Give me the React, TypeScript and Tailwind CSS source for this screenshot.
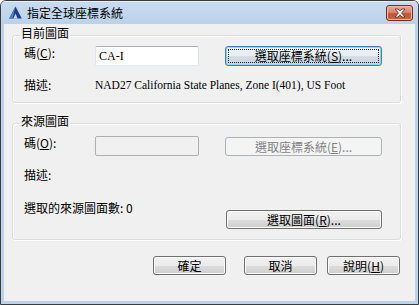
import React from "react";

const CJK = "font-['Noto_Sans_CJK_TC','Noto_Sans_CJK_SC',sans-serif]";
const SERIF = "font-['Liberation_Serif','Noto_Serif_CJK_TC',serif]";

function Btn({
  children,
  className = "",
  kind = "normal",
}: {
  children: React.ReactNode;
  className?: string;
  kind?: "normal" | "focus" | "disabled";
}) {
  if (kind === "disabled") {
    return (
      <div
        className={
          "flex items-center justify-center rounded-[3px] border border-[#adb2b5] bg-[#f4f4f4] text-[12px] leading-[14px] text-[#838383] " +
          className
        }
      >
        {children}
      </div>
    );
  }
  if (kind === "focus") {
    return (
      <div
        className={
          "relative flex items-center justify-center rounded-[3px] border border-[#3c7fb1] bg-[linear-gradient(to_bottom,#eef3f7_0%,#e6ecf1_50%,#d6dde4_50%,#c9d2da_100%)] text-[12px] leading-[14px] text-black shadow-[inset_0_0_0_1px_#8fd6f5] " +
          className
        }
      >
        <div className="absolute inset-[2px] border border-dotted border-[#222]" />
        <span className="relative">{children}</span>
      </div>
    );
  }
  return (
    <div
      className={
        "flex items-center justify-center rounded-[3px] border border-[#707070] bg-[linear-gradient(to_bottom,#f2f2f2_0%,#ebebeb_50%,#dddddd_50%,#cfcfcf_100%)] text-[12px] leading-[14px] text-black shadow-[inset_0_0_0_1px_#fbfbfb] " +
        className
      }
    >
      {children}
    </div>
  );
}

function Group({
  title,
  className = "",
  children,
}: {
  title: string;
  className?: string;
  children: React.ReactNode;
}) {
  return (
    <div
      className={
        "relative ml-[8px] w-[389px] rounded-[3px] border border-[#d5dfe5] shadow-[inset_1px_1px_0_#ffffff,1px_1px_0_#ffffff] " +
        className
      }
    >
      <div className="absolute left-[7px] top-[-10px] bg-[#f0f0f0] px-[1px] text-[12px] leading-[14px] text-black">
        {title}
      </div>
      {children}
    </div>
  );
}

function U({ children }: { children: React.ReactNode }) {
  return <span className="underline underline-offset-[1px]">{children}</span>;
}

export default function App() {
  return (
    <div className={"w-[419px] h-[305px] bg-white " + CJK}>
      <div className="w-[419px] h-[305px] flex flex-col rounded-t-[6px] border border-[#3c3c3c] bg-[#bcd3ec] overflow-hidden">
        {/* title bar */}
        <div className="h-[23px] flex items-center bg-[linear-gradient(to_bottom,#c9dbef_0%,#bcd2ea_100%)] shadow-[inset_0_1px_0_#e4eef9]">
          <svg width="13" height="13" viewBox="0 0 13 13" className="ml-[8px]">
            <polygon points="6.5,0.5 12.8,12.5 0.2,12.5" fill="#1e3c8c" />
            <polygon points="6.5,0.5 3.6,12.5 0.2,12.5" fill="#4f7cc8" />
            <polygon points="6.5,7.5 8.6,12.5 4.4,12.5" fill="#c7d8ee" />
          </svg>
          <div className="ml-[5px] text-[12px] leading-[14px] text-black">指定全球座標系統</div>
          <div className="ml-auto mr-[5px] mt-[1px] w-[27px] h-[16px] flex items-center justify-center rounded-[3px] border border-[#7a2a1e] bg-[linear-gradient(to_bottom,#e9ab9c_0%,#d98571_45%,#c65238_55%,#c9634a_100%)] shadow-[inset_0_0_0_1px_#efb9a9]">
            <svg width="12" height="10" viewBox="0 0 12 10">
              <path
                d="M1 1 L4 1 L6 3.2 L8 1 L11 1 L7.6 5 L11 9 L8 9 L6 6.8 L4 9 L1 9 L4.4 5 Z"
                fill="#ffffff"
                stroke="#5a2a22"
                strokeWidth="0.8"
                strokeLinejoin="round"
              />
            </svg>
          </div>
        </div>

        {/* frame + client */}
        <div className="flex-1 flex px-[3px] pb-[3px]">
          <div className="w-[411px] h-[277px] bg-[#f0f0f0] flex flex-col">
            {/* 目前圖面 */}
            <Group title="目前圖面" className="mt-[11px] pt-[10px] pb-[7px] pl-[11px]">
              <div className="flex items-start h-[20px]">
                <div className="w-[71px] text-[12px] leading-[14px] text-black">
                  碼(<U>C</U>):
                </div>
                <div className="w-[104px] h-[20px] flex items-center border border-[#abadb3] border-b-[#e3e9ef] border-l-[#e2e3ea] border-r-[#dbdfe6] bg-white rounded-[2px]">
                  <span className={"pl-[3px] text-[12px] leading-[14px] text-black " + SERIF}>CA-I</span>
                </div>
                <Btn kind="focus" className="ml-[26px] w-[157px] h-[20px]">
                  選取座標系統(<U>S</U>)...
                </Btn>
              </div>
              <div className="mt-[9px] h-[20px] flex items-center">
                <div className="w-[71px] text-[12px] leading-[14px] text-black">描述:</div>
                <div className={"text-[11.5px] leading-[14px] text-black " + SERIF}>
                  NAD27 California State Planes, Zone I(401), US Foot
                </div>
              </div>
            </Group>

            {/* 來源圖面 */}
            <Group title="來源圖面" className="mt-[20px] pt-[12px] pb-[10px] pl-[11px]">
              <div className="flex items-start h-[20px]">
                <div className="w-[71px] text-[12px] leading-[14px] text-black">
                  碼(<U>O</U>):
                </div>
                <div className="w-[104px] h-[20px] border border-[#afafaf] bg-[#f0f0f0] rounded-[2px]" />
                <Btn kind="disabled" className="ml-[26px] mt-[1px] w-[157px] h-[19px]">
                  選取座標系統(<U>E</U>)...
                </Btn>
              </div>
              <div className="mt-[9px] h-[20px] flex items-center">
                <div className="w-[71px] text-[12px] leading-[14px] text-black">描述:</div>
              </div>
              <div className="mt-[16px] flex items-start">
                <div className="w-[202px] text-[12px] leading-[14px] text-black">選取的來源圖面數: 0</div>
                <Btn className="mt-[9px] w-[156px] h-[19px]">
                  選取圖面(<U>R</U>)...
                </Btn>
              </div>
            </Group>

            {/* bottom buttons */}
            <div className="mt-[16px] flex pl-[149px]">
              <Btn className="w-[73px] h-[19px]">確定</Btn>
              <Btn className="ml-[18px] w-[73px] h-[19px]">取消</Btn>
              <Btn className="ml-[10px] w-[73px] h-[19px]">
                說明(<U>H</U>)
              </Btn>
            </div>
          </div>
        </div>
      </div>
    </div>
  );
}
